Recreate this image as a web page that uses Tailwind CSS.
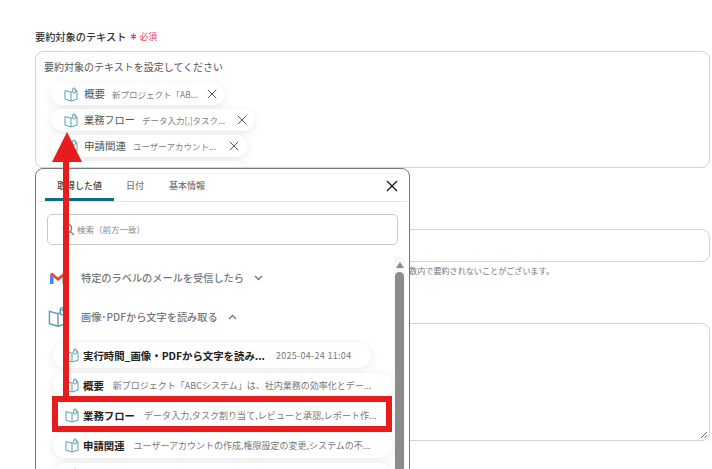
<!DOCTYPE html>
<html lang="ja">
<head>
	<meta charset="UTF-8">
	<meta name="viewport" content="width=device-width, initial-scale=1.0">
	<title>要約対象のテキスト</title>
	<script src="https://cdn.jsdelivr.net/npm/@tailwindcss/browser@4"></script>
</head>
<body class="bg-white font-['Noto_Sans_CJK_JP','Noto_Sans',sans-serif] text-[#555]">
	<svg class="hidden">
		<symbol id="book" viewBox="0 0 14 15">
			<path d="M7 5.2 1 3.6v8.6l6 1.8 6-1.8V3.6l-2 .5M7 5.2V14M7 5.2l1.6-.7" fill="none" stroke="#5a9fb0" stroke-width="1"/>
			<rect x="8.6" y="1" width="3" height="5" rx="1.4" fill="none" stroke="#5a9fb0" stroke-width="1"/>
			<circle cx="10.1" cy="2.6" r=".7" fill="#5a9fb0"/>
		</symbol>
		<symbol id="close" viewBox="0 0 10 10">
			<path d="M.8.8l8.4 8.4M9.2.8.8 9.2" fill="none" stroke="currentColor" stroke-width="1"/>
		</symbol>
	</svg>

	<div class="relative h-[469px] w-[712px] overflow-hidden">
		<!-- form underneath the picker -->
		<div class="pl-[35px] pr-[2px] pt-[28px]">
			<div class="flex h-[17px] items-center text-[10.2px] font-medium text-[#333]">
				要約対象のテキスト
				<svg class="ml-[4px] h-[7px] w-[7px]" viewBox="0 0 7 7"><path d="M3.5.5v6M.9 2l5.2 3M6.100 2 .9 5" stroke="#ee3d5c" stroke-width="1.300"/></svg>
				<span class="ml-[2px] text-[8.8px] font-normal text-[#ee3d5c]">必須</span>
			</div>
			<div class="mt-[6px] h-[117px] overflow-hidden rounded-[8px] border border-[#d4d4d8] px-[8px] pt-[7px]">
				<p class="text-[10px] leading-[16px] text-[#555]">要約対象のテキストを設定してください</p>
				<div class="mt-[8px] flex flex-col items-start gap-[4px] pl-[7px]">
					<div class="flex h-[22px] w-[174px] items-center rounded-full bg-white pl-[13px] shadow-[0_2px_10px_rgba(0,0,0,0.09)]">
						<svg class="h-[15px] w-[14px]"><use href="#book"/></svg>
						<span class="ml-[6px] text-[10.5px]">概要</span>
						<span class="ml-[7px] text-[8.5px] text-[#808080]">新プロジェクト「AB...</span>
						<svg class="ml-auto mr-[8px] h-[10px] w-[10px] text-[#555]"><use href="#close"/></svg>
					</div>
					<div class="flex h-[22px] w-[204px] items-center rounded-full bg-white pl-[13px] shadow-[0_2px_10px_rgba(0,0,0,0.09)]">
						<svg class="h-[15px] w-[14px]"><use href="#book"/></svg>
						<span class="ml-[6px] text-[10.2px]">業務フロー</span>
						<span class="ml-[7px] text-[8.5px] text-[#808080]">データ入力[,]タスク...</span>
						<svg class="ml-auto mr-[8px] h-[10px] w-[10px] text-[#555]"><use href="#close"/></svg>
					</div>
					<div class="flex h-[22px] w-[196px] items-center rounded-full bg-white pl-[13px] shadow-[0_2px_10px_rgba(0,0,0,0.09)]">
						<svg class="h-[15px] w-[14px]"><use href="#book"/></svg>
						<span class="ml-[6px] text-[10.5px]">申請関連</span>
						<span class="ml-[7px] text-[8.5px] text-[#808080]">ユーザーアカウント...</span>
						<svg class="ml-auto mr-[8px] h-[10px] w-[10px] text-[#555]"><use href="#close"/></svg>
					</div>
					<div class="h-[22px] w-[194px] rounded-full bg-white shadow-[0_2px_10px_rgba(0,0,0,0.09)]"></div>
				</div>
			</div>
			<div class="mt-[61px] h-[33px] rounded-[8px] border border-[#d4d4d8]"></div>
			<p class="mt-[3px] w-[519px] whitespace-nowrap text-right text-[8.1px] leading-[12px] text-[#777]">文字数によっては指定した文字数内で要約されないことがございます。</p>
			<div class="relative mt-[46px] h-[118px] rounded-[8px] border border-[#d4d4d8]">
				<svg class="absolute bottom-[1px] right-[1px] h-[8px] w-[8px]" viewBox="0 0 8 8"><path d="M1 7 7 1M4.500 7 7 4.500" stroke="#666" stroke-width="1"/></svg>
			</div>
		</div>

		<!-- value picker -->
		<div class="absolute left-[35px] top-[168px] h-[320px] w-[375px] overflow-hidden rounded-t-[8px] border border-[#777] bg-white">
			<div class="relative mx-[2px] flex h-[33px] items-center border-b border-[#e5e5e5] pl-[7px] text-[9px] font-medium text-[#777]">
				<div class="flex h-[32px] w-[69px] items-center justify-center border-b-[3px] border-[#0f6b84] pt-[4px] text-[#444]">取得した値</div>
				<span class="ml-[12px] pt-[1px]">日付</span>
				<span class="ml-[25px] pt-[1px]">基本情報</span>
				<svg class="absolute right-[9px] top-[11px] h-[12px] w-[12px] text-[#111]"><use href="#close"/></svg>
			</div>

			<div class="mx-[11px] mt-[12px] flex h-[31px] w-[351px] items-center rounded-[5px] border border-[#c9c9cf] pb-[1px] pl-[14px]">
				<svg class="h-[13px] w-[13px]" viewBox="0 0 13 13"><circle cx="5.500" cy="5.500" r="4.200" fill="none" stroke="#777" stroke-width="1.200"/><path d="m8.600 8.600 3.400 3.400" stroke="#777" stroke-width="1.200"/></svg>
				<span class="ml-[2px] text-[8.5px] text-[#888]">検索（前方一致）</span>
			</div>

			<div class="mt-[24px] flex h-[18px] items-center pl-[13px]">
				<svg class="h-[14px] w-[18px]" viewBox="0 0 18 14">
					<path d="M1 3.500V13h3.500V6z" fill="#4285f4"/>
					<path d="M13.500 6V13H17V3.500z" fill="#34a853"/>
					<path d="M1 3.500 3 1.500 9 6.500 15 1.500 17 3.500 9 10z" fill="#e0483a"/>
				</svg>
				<span class="ml-[14px] text-[10.2px] font-medium text-[#777]">特定のラベルのメールを受信したら</span>
				<svg class="ml-[10px] h-[6px] w-[9px]" viewBox="0 0 9 6"><path d="m1 1 3.500 3.500L8 1" fill="none" stroke="#777" stroke-width="1.300"/></svg>
			</div>
			<div class="mt-[20px] flex h-[20px] items-center pl-[12px]">
				<svg class="h-[22px] w-[20px]"><use href="#book"/></svg>
				<span class="ml-[13px] text-[10.2px] font-medium text-[#777]">画像･PDFから文字を読み取る</span>
				<svg class="ml-[10px] h-[6px] w-[9px]" viewBox="0 0 9 6"><path d="m1 5 3.500-3.500L8 5" fill="none" stroke="#777" stroke-width="1.300"/></svg>
			</div>

			<div class="mt-[16px] flex flex-col items-start gap-[5px] pl-[17px]">
				<div class="flex h-[25px] w-[318px] items-center rounded-full bg-white pl-[12px] shadow-[0_1px_8px_rgba(0,0,0,0.09)]">
					<svg class="h-[15px] w-[14px]"><use href="#book"/></svg>
					<span class="ml-[4px] text-[10.4px] font-bold text-[#222]">実行時間_画像・PDFから文字を読み...</span>
					<span class="ml-[11px] text-[9px] tracking-[0.3px] text-[#777]">2025-04-24 11:04</span>
				</div>
				<div class="flex h-[25px] w-[339px] items-center rounded-full bg-white pl-[12px] shadow-[0_1px_8px_rgba(0,0,0,0.09)]">
					<svg class="h-[15px] w-[14px]"><use href="#book"/></svg>
					<span class="ml-[4px] text-[10.4px] font-bold text-[#222]">概要</span>
					<span class="ml-[9px] text-[9px] text-[#777]">新プロジェクト「ABCシステム」は、社内業務の効率化とデー...</span>
				</div>
				<div class="flex h-[25px] w-[339px] items-center rounded-full bg-white pl-[12px] shadow-[0_1px_8px_rgba(0,0,0,0.09)]">
					<svg class="h-[15px] w-[14px]"><use href="#book"/></svg>
					<span class="ml-[4px] text-[10.4px] font-bold text-[#222]">業務フロー</span>
					<span class="ml-[9px] text-[9px] tracking-[0.06px] text-[#777]">データ入力,タスク割り当て,レビューと承認,レポート作...</span>
				</div>
				<div class="flex h-[25px] w-[339px] items-center rounded-full bg-white pl-[12px] shadow-[0_1px_8px_rgba(0,0,0,0.09)]">
					<svg class="h-[15px] w-[14px]"><use href="#book"/></svg>
					<span class="ml-[4px] text-[10.4px] font-bold text-[#222]">申請関連</span>
					<span class="ml-[9px] text-[9px] text-[#777]">ユーザーアカウントの作成,権限設定の変更,システムの不...</span>
				</div>
				<div class="flex h-[25px] w-[339px] items-center rounded-full bg-white pl-[12px] shadow-[0_1px_8px_rgba(0,0,0,0.09)]">
					<svg class="h-[15px] w-[14px]"><use href="#book"/></svg>
					<span class="ml-[4px] text-[10.4px] font-bold text-[#222]">会議体</span>
				</div>
			</div>

			<!-- scrollbar -->
			<div class="absolute left-[358px] top-[88px] h-[230px] w-[11px] bg-[#f7f7f7]">
				<div class="mx-auto mt-[5px] h-0 w-0 border-x-[4px] border-b-[6px] border-x-transparent border-b-[#8c8c8c]"></div>
				<div class="mx-auto mt-[4px] h-[200px] w-[9px] rounded-t-full bg-[#8c8c8c]"></div>
			</div>
		</div>

		<!-- red annotations -->
		<div class="absolute left-[52px] top-[396px] h-[36px] w-[340px] border-[6px] border-[#e81c1c]"></div>
		<div class="absolute left-[63px] top-[160px] h-[237px] w-[6px] bg-[#e81c1c]"></div>
		<div class="absolute left-[52px] top-[132px] h-0 w-0 border-x-[15px] border-b-[30px] border-x-transparent border-b-[#e81c1c]"></div>
	</div>
</body>
</html>
